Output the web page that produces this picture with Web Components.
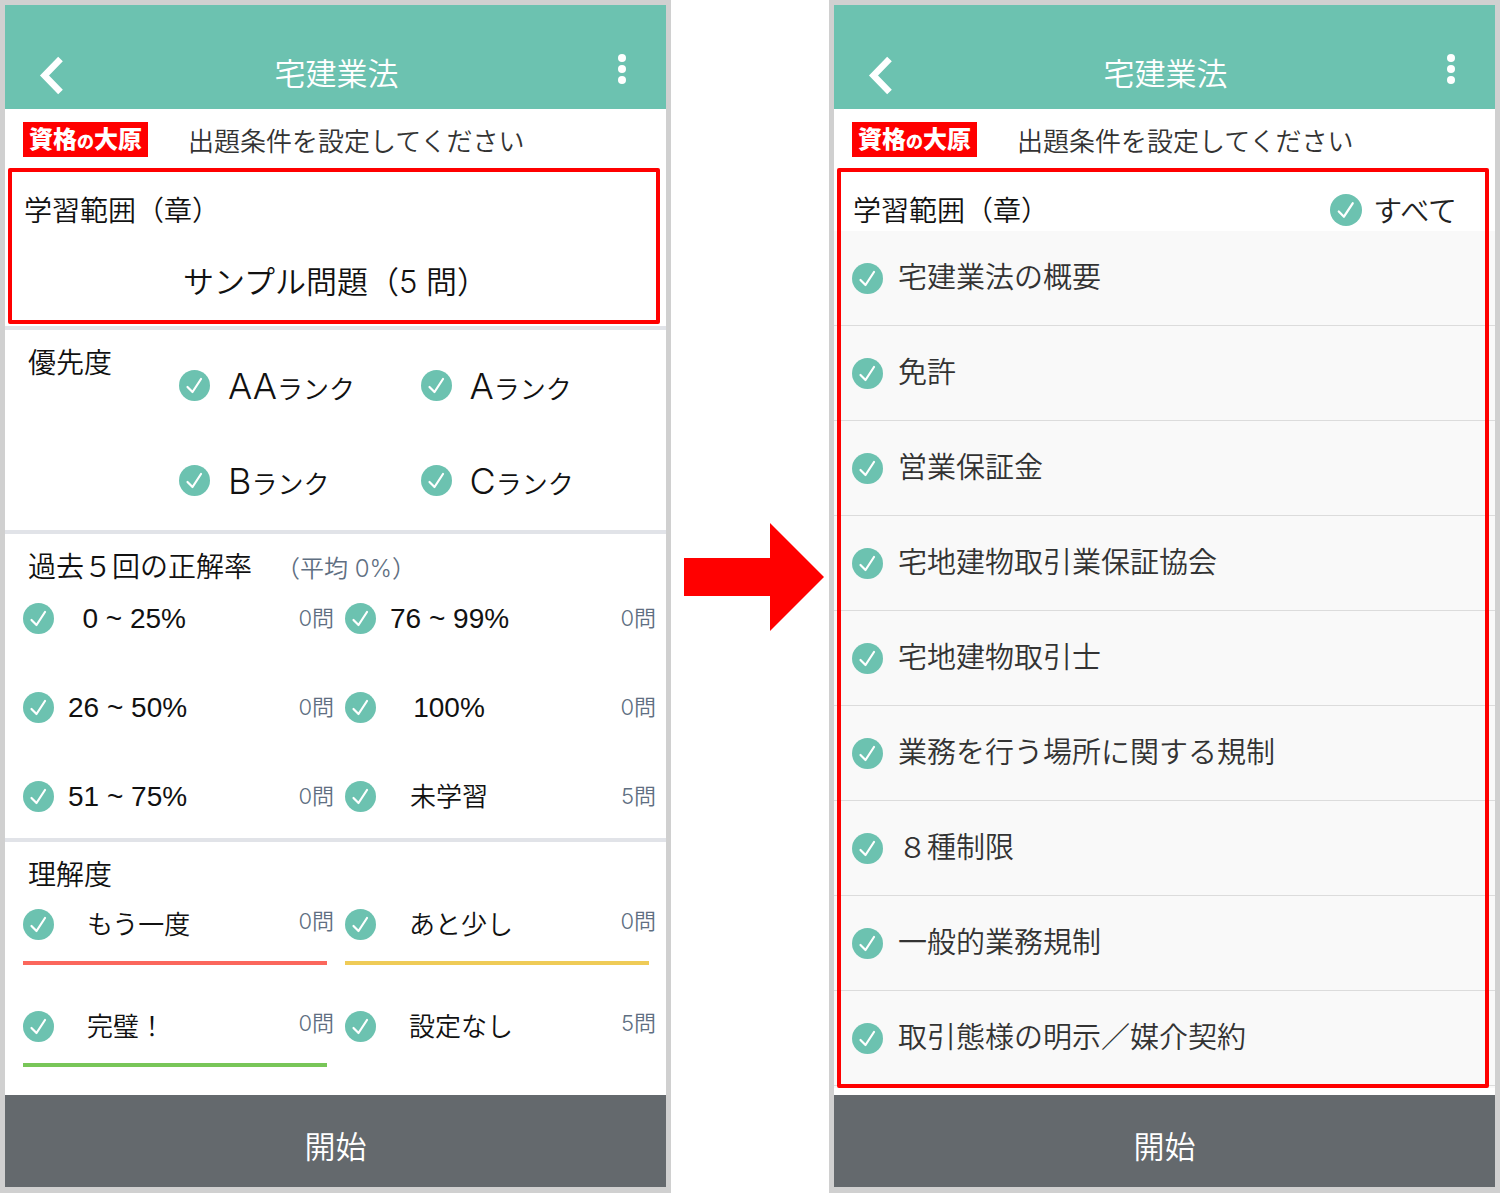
<!DOCTYPE html>
<html lang="ja">
<head>
<meta charset="UTF-8">
<meta name="viewport" content="width=device-width, initial-scale=1.0">
<title>宅建業法</title>
<style>
    body {
        margin: 0;
        background: #fff;
        color: #111;
        font-family: "Inter", "Noto Sans CJK JP", sans-serif;
        font-weight: 350;
        --teal: #6cc2b0;
        --red: #ff0000;
    }
    main {
        display: grid;
        grid-template-columns: 1fr 158px 1fr;
    }
</style>
</head>
<body>
<main>
    <phone-screen heading="宅建業法">
        <focus-frame>
            <screen-section class="range" heading="学習範囲（章）">
                <chapter-name>サンプル問題（5 問）</chapter-name>
            </screen-section>
        </focus-frame>
        <screen-section divided heading="優先度">
            <rank-grid>
                <check-item kind="rank"><big-letter>AA</big-letter>ランク</check-item>
                <check-item kind="rank"><big-letter>A</big-letter>ランク</check-item>
                <check-item kind="rank"><big-letter>B</big-letter>ランク</check-item>
                <check-item kind="rank"><big-letter>C</big-letter>ランク</check-item>
            </rank-grid>
        </screen-section>
        <screen-section divided heading="過去５回の正解率" note="（平均 0%）">
            <count-grid>
                <check-item kind="rate" count="0問">0 ~ 25%</check-item>
                <check-item kind="rate" count="0問" centered>76 ~ 99%</check-item>
                <check-item kind="rate" count="0問">26 ~ 50%</check-item>
                <check-item kind="rate" count="0問" centered>100%</check-item>
                <check-item kind="rate" count="0問">51 ~ 75%</check-item>
                <check-item kind="rate" count="5問" centered kanji>未学習</check-item>
            </count-grid>
        </screen-section>
        <screen-section divided heading="理解度">
            <count-grid lined>
                <check-item kind="level" count="0問" line="#fb675c">もう一度</check-item>
                <check-item kind="level" count="0問" line="#efcb57">あと少し</check-item>
                <check-item kind="level" count="0問" line="#78c658">完璧！</check-item>
                <check-item kind="level" count="5問">設定なし</check-item>
            </count-grid>
        </screen-section>
    </phone-screen>

    <step-arrow></step-arrow>

    <phone-screen heading="宅建業法">
        <focus-frame>
            <screen-section heading="学習範囲（章）" class="range">
                <check-item kind="all" slot="side">すべて</check-item>
            </screen-section>
            <chapter-list></chapter-list>
        </focus-frame>
    </phone-screen>
</main>

<script>
class PhoneScreen extends HTMLElement {
    constructor() {
        super();
        this.attachShadow({ mode: 'open' });
    }

    connectedCallback() {
        this.shadowRoot.innerHTML = `
            <style>
                :host {
                    display: flex;
                    flex-direction: column;
                    border: 5px solid #d0d0d0;
                    border-bottom-width: 6px;
                }
                .content {
                    flex: 1;
                    display: flex;
                    flex-direction: column;
                }
                .start {
                    height: 92px;
                    padding: 6px 0 0;
                    border: 0;
                    background: #64696d;
                    color: #fff;
                    font: inherit;
                    font-size: 31px;
                }
            </style>
            <app-header>${this.getAttribute('heading')}</app-header>
            <notice-bar>出題条件を設定してください</notice-bar>
            <div class="content"><slot></slot></div>
            <button class="start" type="button">開始</button>
        `;
    }
}

class AppHeader extends HTMLElement {
    constructor() {
        super();
        this.attachShadow({ mode: 'open' });
        this.shadowRoot.innerHTML = `
            <style>
                :host {
                    display: grid;
                    grid-template-columns: 60px 1fr 60px;
                    align-items: center;
                    height: 70px;
                    padding: 34px 14px 0 16px;
                    background: var(--teal);
                    color: #fff;
                }
                h1 {
                    margin: 0;
                    padding-bottom: 6px;
                    font-size: 31px;
                    font-weight: inherit;
                    text-align: center;
                }
                button {
                    display: flex;
                    justify-content: center;
                    height: 70px;
                    padding: 16px 0 0;
                    border: 0;
                    background: none;
                }
                .menu { padding-top: 14px; }
            </style>
            <button type="button" aria-label="戻る">
                <svg width="24" height="40" viewBox="0 0 24 40" fill="none" stroke="#fff" stroke-width="6.5">
                    <path d="M21.5 4 L5.500 20.5 L21.5 37"/>
                </svg>
            </button>
            <h1><slot></slot></h1>
            <button class="menu" type="button" aria-label="メニュー">
                <svg width="10" height="32" viewBox="0 0 10 32" fill="#fff">
                    <circle cx="5" cy="5" r="4"/>
                    <circle cx="5" cy="16" r="4"/>
                    <circle cx="5" cy="27" r="4"/>
                </svg>
            </button>
        `;
    }
}

class NoticeBar extends HTMLElement {
    constructor() {
        super();
        this.attachShadow({ mode: 'open' });
        this.shadowRoot.innerHTML = `
            <style>
                :host {
                    display: flex;
                    align-items: center;
                    gap: 40px;
                    height: 57px;
                    padding: 2px 18px 0;
                    color: #333;
                    font-size: 26px;
                    white-space: nowrap;
                }
                .logo {
                    width: 125px;
                    height: 35px;
                    background: var(--red);
                    color: #fff;
                    font-size: 24px;
                    font-weight: 900;
                    line-height: 35px;
                    text-align: center;
                }
                small { font-size: 17px; }
            </style>
            <div class="logo">資格<small>の</small>大原</div>
            <slot></slot>
        `;
    }
}

// Red outline laid over whatever it wraps
class FocusFrame extends HTMLElement {
    constructor() {
        super();
        this.attachShadow({ mode: 'open' });
        this.shadowRoot.innerHTML = `
            <style>
                :host {
                    display: block;
                    position: relative;
                    margin-bottom: 2px;
                }
                :host::after {
                    content: "";
                    position: absolute;
                    inset: 0 6px 0 3px;
                    border: 4px solid var(--red);
                    border-radius: 2px;
                    pointer-events: none;
                }
            </style>
            <slot></slot>
        `;
    }
}

class ScreenSection extends HTMLElement {
    constructor() {
        super();
        this.attachShadow({ mode: 'open' });
    }

    connectedCallback() {
        const note = this.getAttribute('note');

        this.shadowRoot.innerHTML = `
            <style>
                :host { display: block; }
                :host([divided]) { border-top: 4px solid #e1e3e8; }
                header {
                    display: flex;
                    align-items: center;
                    justify-content: space-between;
                    height: 64px;
                    padding: 0 23px;
                }
                :host(.range) header {
                    height: 43px;
                    padding: 20px 38px 0 19px;
                }
                h2 {
                    margin: 0;
                    padding-bottom: 2px;
                    font-size: 28px;
                    font-weight: inherit;
                }
                .note {
                    flex: 1;
                    margin-left: 24px;
                    color: #5f6f82;
                    font-size: 24px;
                }
            </style>
            <header>
                <h2>${this.getAttribute('heading')}</h2>
                ${note ? `<span class="note">${note}</span>` : ''}
                <slot name="side"></slot>
            </header>
            <slot></slot>
        `;
    }
}

class ChapterName extends HTMLElement {
    constructor() {
        super();
        this.attachShadow({ mode: 'open' });
        this.shadowRoot.innerHTML = `
            <style>
                :host {
                    display: block;
                    height: 93px;
                    font-size: 31px;
                    line-height: 102px;
                    text-align: center;
                }
            </style>
            <slot></slot>
        `;
    }
}

class RankGrid extends HTMLElement {
    constructor() {
        super();
        this.attachShadow({ mode: 'open' });
        this.shadowRoot.innerHTML = `
            <style>
                /* first row shares its line with the section heading */
                :host {
                    display: grid;
                    grid-template-columns: 1fr 1fr;
                    grid-auto-rows: 95px;
                    align-items: center;
                    margin-top: -56px;
                    padding: 0 4px 2px 174px;
                }
            </style>
            <slot></slot>
        `;
    }
}

class BigLetter extends HTMLElement {
    constructor() {
        super();
        this.attachShadow({ mode: 'open' });
        this.shadowRoot.innerHTML = `<style>:host { font-size: 36px; }</style><slot></slot>`;
    }
}

class CountGrid extends HTMLElement {
    constructor() {
        super();
        this.attachShadow({ mode: 'open' });
        this.shadowRoot.innerHTML = `
            <style>
                :host {
                    display: grid;
                    grid-template-columns: 1fr 1fr;
                    gap: 48px 11px;
                    padding: 0 10px 21px 18px;
                }
                :host([lined]) {
                    row-gap: 43px;
                    padding-bottom: 28px;
                }
            </style>
            <slot></slot>
        `;
    }
}

class CheckItem extends HTMLElement {
    constructor() {
        super();
        this.attachShadow({ mode: 'open' });
    }

    connectedCallback() {
        const count = this.getAttribute('count');
        const line = this.getAttribute('line');

        this.shadowRoot.innerHTML = `
            <style>
                :host { display: block; }
                label {
                    display: flex;
                    align-items: center;
                    white-space: nowrap;
                }
                .box {
                    display: grid;
                    flex: none;
                    width: 31px;
                    height: 31px;
                }
                .box > * {
                    grid-area: 1 / 1;
                    width: 100%;
                    height: 100%;
                }
                input {
                    appearance: none;
                    margin: 0;
                    border-radius: 50%;
                    background: #d0d0d0;
                }
                input:checked { background: var(--teal); }
                svg { pointer-events: none; }
                .count {
                    margin-left: auto;
                    padding-bottom: 6px;
                    color: #5f6f82;
                    font-size: 22px;
                }

                :host([kind="rank"]) label { gap: 18px; font-size: 26px; }

                :host([kind="rate"]) label { height: 41px; gap: 14px; font-size: 28px; }
                :host([kind="rate"]) .text {
                    width: 118px;
                    font-family: "Liberation Sans", "Noto Sans CJK JP", sans-serif;
                    text-align: right;
                }
                :host([kind="rate"][centered]) .text { text-align: center; }
                :host([kind="rate"][kanji]) .text { padding-bottom: 4px; font-size: 26px; }

                :host([kind="level"]) label { height: 37px; gap: 33px; font-size: 26px; }
                :host([kind="level"]) .text { padding-bottom: 4px; }
                :host([kind="level"]) .count { padding-bottom: 12px; }
                .line {
                    height: 4px;
                    margin: 18px 7px 0 0;
                    background: ${line || 'transparent'};
                }

                :host([kind="all"]) label { gap: 11px; font-size: 29px; color: #222; }
                :host([kind="all"]) .box { width: 32px; height: 32px; }
                :host([kind="all"]) .text { padding-bottom: 2px; }

                :host([kind="chapter"]) { border-bottom: 1px solid #dcdcdc; }
                :host([kind="chapter"]) label {
                    height: 94px;
                    gap: 15px;
                    padding: 0 18px;
                    color: #333;
                    font-size: 29px;
                }
                :host([kind="chapter"]) .text { padding-bottom: 6px; }
            </style>
            <label>
                <span class="box">
                    <input type="checkbox" checked>
                    <svg viewBox="0 0 31 31" fill="none" stroke="#fff" stroke-width="2.2" stroke-linecap="round" stroke-linejoin="round">
                        <path d="M8.500 17 L13.500 22 L22 9"/>
                    </svg>
                </span>
                <span class="text"><slot></slot></span>
                ${count ? `<span class="count">${count}</span>` : ''}
            </label>
            ${line ? '<div class="line"></div>' : ''}
        `;
    }
}

const chapters = [
    '宅建業法の概要',
    '免許',
    '営業保証金',
    '宅地建物取引業保証協会',
    '宅地建物取引士',
    '業務を行う場所に関する規制',
    '８種制限',
    '一般的業務規制',
    '取引態様の明示／媒介契約'
];

class ChapterList extends HTMLElement {
    constructor() {
        super();
        this.attachShadow({ mode: 'open' });
    }

    connectedCallback() {
        const items = chapters.map(name => `<li><check-item kind="chapter">${name}</check-item></li>`);

        this.shadowRoot.innerHTML = `
            <style>
                :host { display: block; padding-bottom: 2px; background: #f9f9f9; }
                ul {
                    margin: 0;
                    padding: 0;
                    list-style: none;
                }
            </style>
            <ul>${items.join('')}</ul>
        `;
    }
}

class StepArrow extends HTMLElement {
    constructor() {
        super();
        this.attachShadow({ mode: 'open' });
        this.shadowRoot.innerHTML = `
            <style>
                :host {
                    display: flex;
                    align-items: center;
                    justify-content: center;
                    padding: 0 0 40px 8px;
                }
            </style>
            <svg width="140" height="108" viewBox="0 0 140 108" fill="#ff0000">
                <path d="M0 35 H86 V0 L140 54 L86 108 V73 H0 Z"/>
            </svg>
        `;
    }
}

customElements.define('phone-screen', PhoneScreen);
customElements.define('app-header', AppHeader);
customElements.define('notice-bar', NoticeBar);
customElements.define('focus-frame', FocusFrame);
customElements.define('screen-section', ScreenSection);
customElements.define('chapter-name', ChapterName);
customElements.define('rank-grid', RankGrid);
customElements.define('big-letter', BigLetter);
customElements.define('count-grid', CountGrid);
customElements.define('check-item', CheckItem);
customElements.define('chapter-list', ChapterList);
customElements.define('step-arrow', StepArrow);
</script>
</body>
</html>
